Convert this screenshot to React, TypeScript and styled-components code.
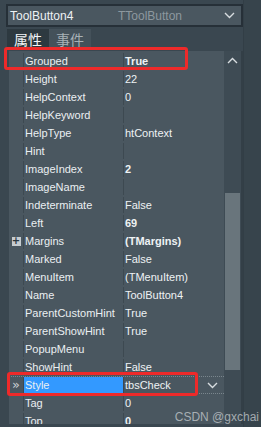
import React from 'react';
import styled, { createGlobalStyle } from 'styled-components';

type Prop = {
  name: string;
  value: string;
  bold?: boolean;
  expand?: boolean;
  selected?: boolean;
};

const props: Prop[] = [
  { name: 'Grouped', value: 'True', bold: true },
  { name: 'Height', value: '22' },
  { name: 'HelpContext', value: '0' },
  { name: 'HelpKeyword', value: '' },
  { name: 'HelpType', value: 'htContext' },
  { name: 'Hint', value: '' },
  { name: 'ImageIndex', value: '2', bold: true },
  { name: 'ImageName', value: '' },
  { name: 'Indeterminate', value: 'False' },
  { name: 'Left', value: '69', bold: true },
  { name: 'Margins', value: '(TMargins)', bold: true, expand: true },
  { name: 'Marked', value: 'False' },
  { name: 'MenuItem', value: '(TMenuItem)' },
  { name: 'Name', value: 'ToolButton4' },
  { name: 'ParentCustomHint', value: 'True' },
  { name: 'ParentShowHint', value: 'True' },
  { name: 'PopupMenu', value: '' },
  { name: 'ShowHint', value: 'False' },
  { name: 'Style', value: 'tbsCheck', selected: true },
  { name: 'Tag', value: '0' },
  { name: 'Top', value: '0', bold: true },
];

const Chevron = ({ up }: { up?: boolean }) => (
  <svg width="11" height="7" viewBox="0 0 11 7">
    <path
      d={up ? 'M1 6L5.5 1.5L10 6' : 'M1 1L5.5 5.5L10 1'}
      fill="none"
      stroke="#d8dde0"
      strokeWidth="1.4"
    />
  </svg>
);

export default function App() {
  return (
    <>
      <GlobalStyle />
      <Window>
        <Inspector>
          <ObjectCombo>
            <span className="name">ToolButton4</span>
            <span className="type">TToolButton</span>
            <Chevron />
          </ObjectCombo>
          <Tabs>
            <Tab active>属性</Tab>
            <Tab>事件</Tab>
          </Tabs>
          <GridWrap>
            <Grid>
              {props.map(p => (
                <Row key={p.name} selected={p.selected}>
                  <Gutter>
                    {p.expand && <ExpandBox>+</ExpandBox>}
                    {p.selected && <Marker>»</Marker>}
                  </Gutter>
                  <NameCell selected={p.selected}>{p.name}</NameCell>
                  <ValueCell bold={p.bold}>
                    {p.value}
                    {p.selected && <Chevron />}
                  </ValueCell>
                </Row>
              ))}
            </Grid>
            <ScrollBar>
              <ScrollButton>
                <Chevron up />
              </ScrollButton>
              <Thumb />
            </ScrollBar>
          </GridWrap>
        </Inspector>
        <SidePanel />
        <Highlight style={{ left: 4, top: 47, width: 184, height: 23 }} />
        <Highlight style={{ left: 7, top: 372, width: 191, height: 24 }} />
        <Watermark>CSDN @gxchai</Watermark>
      </Window>
    </>
  );
}

const GlobalStyle = createGlobalStyle`
  html, body {
    margin: 0;
    padding: 0;
    background: #3a4750;
  }
  body {
    font-family: 'Liberation Sans', 'Noto Sans CJK SC', sans-serif;
    font-size: 11px;
    color: #e6ebee;
  }
`;

const Window = styled.div`
  position: relative;
  width: 261px;
  height: 427px;
  overflow: hidden;
  display: flex;
  background: #3a4750;
`;

const Inspector = styled.div`
  width: 237px;
  padding: 4px 0 0 6px;
  display: flex;
  flex-direction: column;
`;

const ObjectCombo = styled.div`
  height: 19px;
  display: flex;
  align-items: center;
  padding: 0 6px 0 2px;
  background: #4a5760;
  border: 2px solid #263038;
  font-size: 12px;

  .name {
    width: 108px;
    color: #eef2f4;
  }

  .type {
    flex: 1;
    color: #8d989f;
  }
`;

const Tabs = styled.div`
  display: flex;
  height: 20px;
  margin: 2px 0 2px 1px;
`;

const Tab = styled.div<{ active?: boolean }>`
  width: 42px;
  display: flex;
  align-items: center;
  justify-content: center;
  font-family: 'Noto Sans CJK SC', sans-serif;
  font-size: 14px;
  color: ${p => (p.active ? '#f2f5f7' : '#a7b0b6')};
  background: ${p => (p.active ? '#2d3940' : '#44515a')};
`;

const GridWrap = styled.div`
  display: flex;
  margin-left: 3px;
  height: 373px;
  overflow: hidden;
  border-right: 2px solid #333f47;
`;

const Grid = styled.div`
  flex: 1;
  padding-top: 1px;
  background: #4a5760;
`;

const Row = styled.div<{ selected?: boolean }>`
  box-sizing: border-box;
  display: flex;
  height: 18px;
  border-top: 1px dotted ${p => (p.selected ? '#7a868d' : 'transparent')};
  border-bottom: 1px dotted ${p => (p.selected ? '#7a868d' : 'transparent')};
`;

const Gutter = styled.div`
  width: 14px;
  display: flex;
  align-items: center;
  justify-content: center;
  border-right: 1px solid #3d4951;
`;

const ExpandBox = styled.div`
  width: 9px;
  height: 9px;
  display: flex;
  align-items: center;
  justify-content: center;
  font-family: 'DejaVu Sans', sans-serif;
  font-size: 10px;
  font-weight: bold;
  line-height: 1;
  color: #2b3840;
  background: #c6ccd0;
`;

const Marker = styled.div`
  font-family: 'DejaVu Sans', sans-serif;
  font-size: 13px;
  color: #c9cfd3;
  line-height: 1;
  margin-top: -2px;
`;

const NameCell = styled.div<{ selected?: boolean }>`
  width: 98px;
  display: flex;
  align-items: center;
  padding-left: 1px;
  white-space: nowrap;
  overflow: hidden;
  color: #eaeff2;
  background: ${p => (p.selected ? '#3399ff' : 'transparent')};
  border-right: 1px solid #3d4951;
`;

const ValueCell = styled.div<{ bold?: boolean }>`
  flex: 1;
  display: flex;
  align-items: center;
  justify-content: space-between;
  padding: 0 6px 0 1px;
  white-space: nowrap;
  font-weight: ${p => (p.bold ? 'bold' : 'normal')};
  color: #eef2f4;
`;

const ScrollBar = styled.div`
  width: 17px;
  display: flex;
  flex-direction: column;
  background: #3e4b54;
`;

const ScrollButton = styled.div`
  height: 18px;
  display: flex;
  align-items: center;
  justify-content: center;
`;

const Thumb = styled.div`
  margin: 124px 1px 0 1px;
  height: 177px;
  background: #69757c;
`;

const SidePanel = styled.div`
  flex: 1;
  background: #37444c;
  border-left: 1px solid #323e46;
`;

const Highlight = styled.div`
  position: absolute;
  box-sizing: border-box;
  border: 3px solid #ee2a2a;
  border-radius: 3px;
`;

const Watermark = styled.div`
  position: absolute;
  right: 2px;
  bottom: 3px;
  font-family: 'Liberation Sans', sans-serif;
  font-size: 12px;
  color: rgba(200, 205, 208, 0.75);
`;
